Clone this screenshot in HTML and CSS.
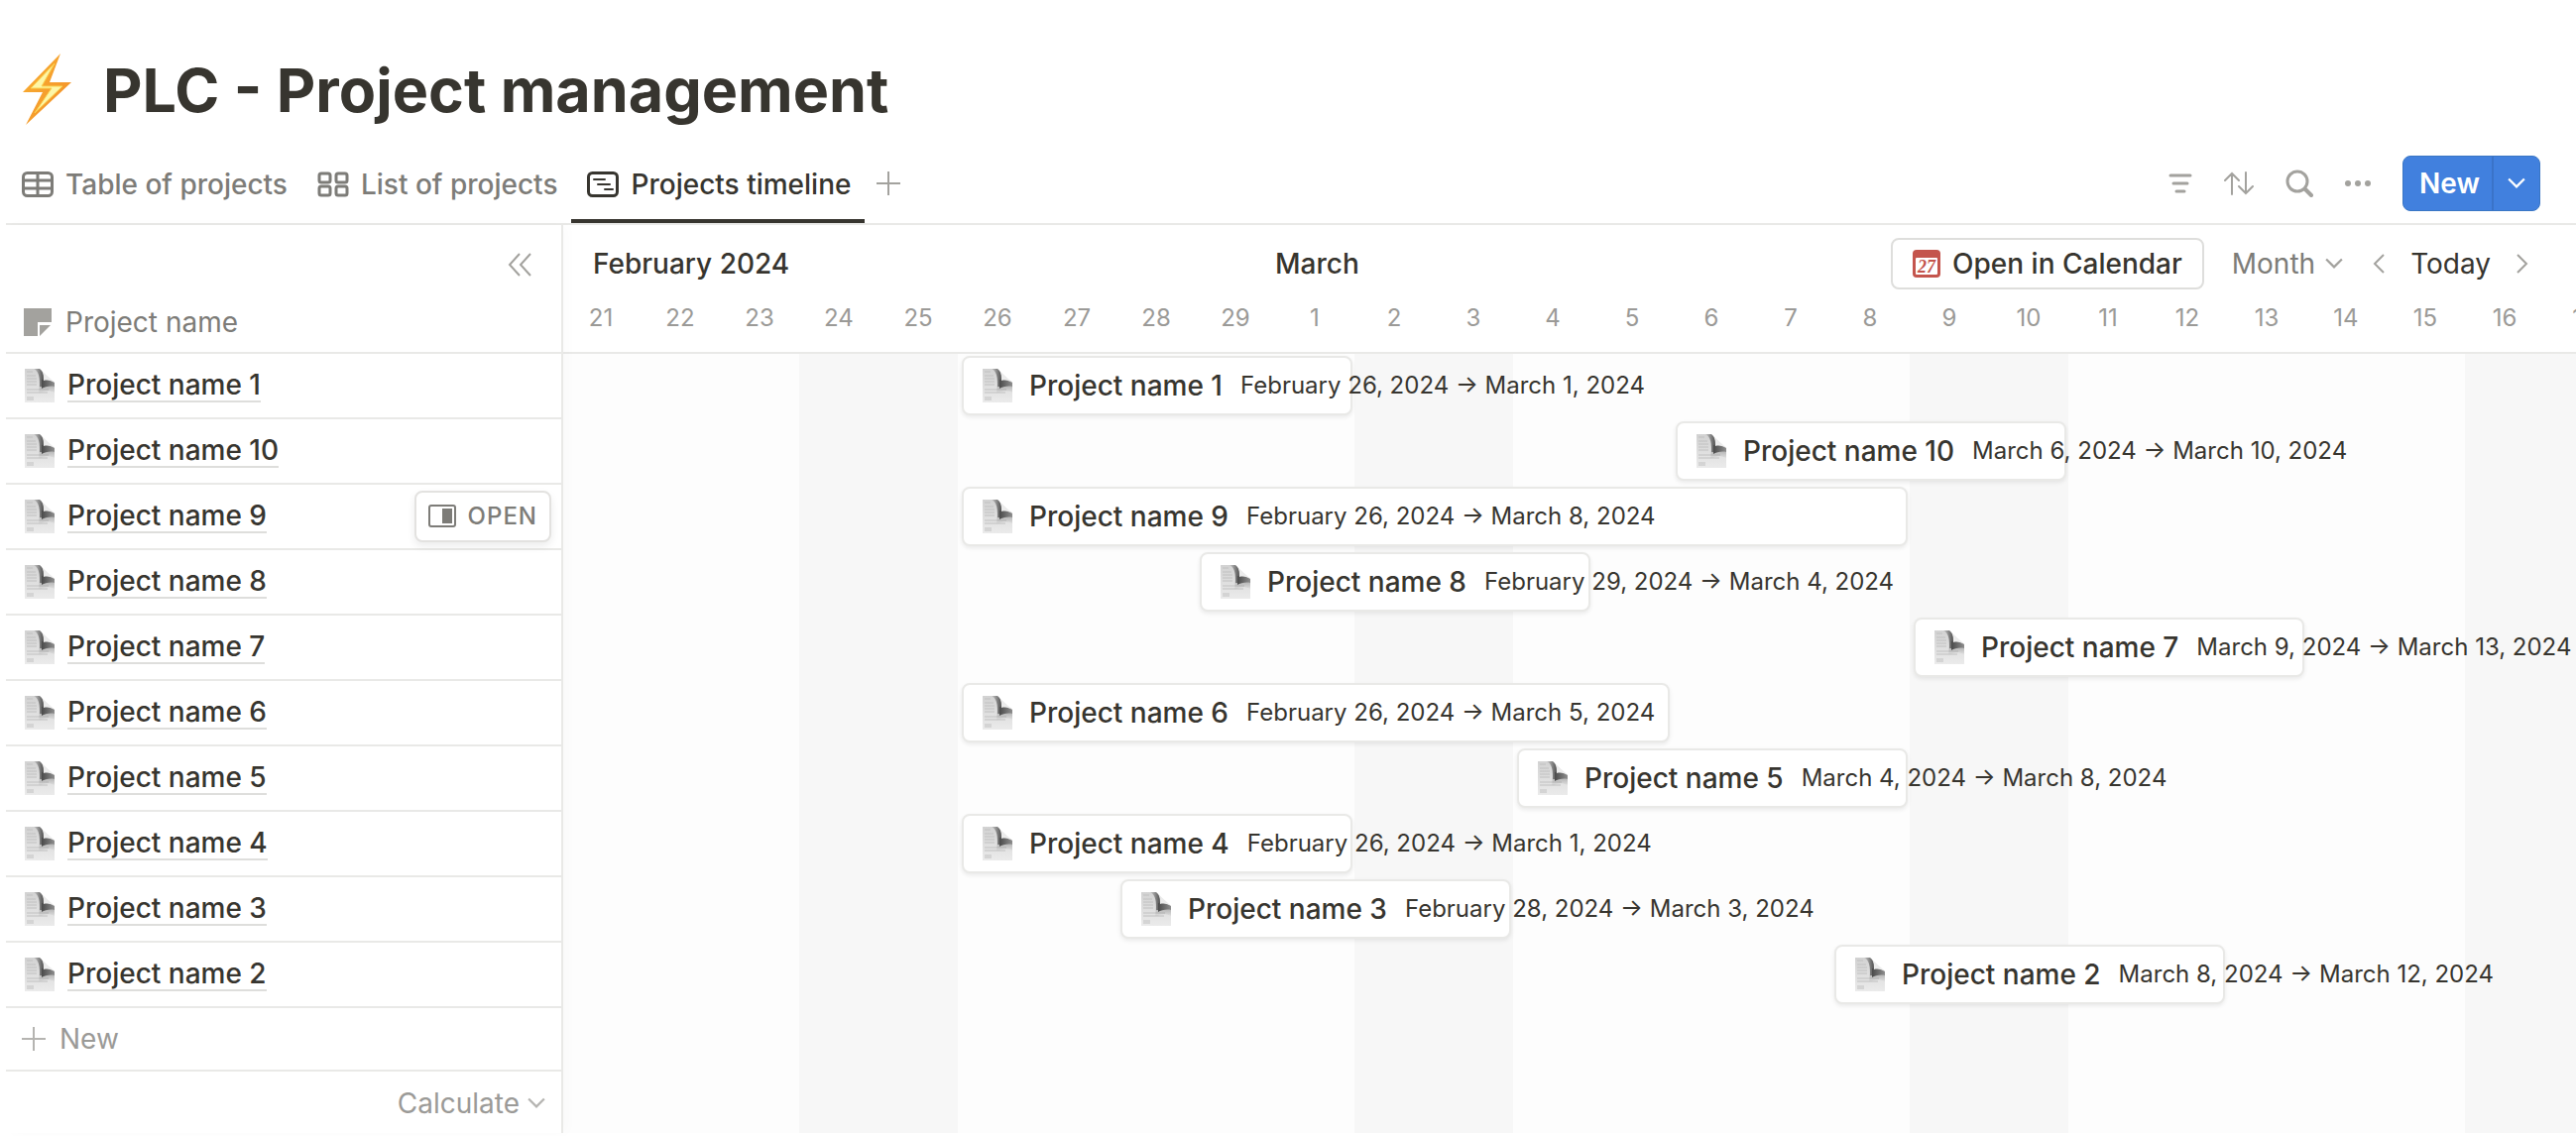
FILE: index.html
```html
<!DOCTYPE html>
<html lang="en">
<head>
    <meta charset="UTF-8">
    <meta name="viewport" content="width=device-width, initial-scale=1.0">
    <title>PLC - Project management</title>
    <link rel="stylesheet" href="styles.css">
</head>
<body>
    <!-- Shared icons -->
    <svg class="sprite" aria-hidden="true">
        <defs>
            <linearGradient id="paper" x1="0" y1="0" x2="0" y2="1">
                <stop offset="0" stop-color="#d2d2d2"/>
                <stop offset="1" stop-color="#ebebeb"/>
            </linearGradient>
            <linearGradient id="crease" x1="0" y1="0" x2="1" y2="0">
                <stop offset="0" stop-color="#c8c8c8"/>
                <stop offset="1" stop-color="#4c4c4c"/>
            </linearGradient>
            <linearGradient id="fold" x1="0" y1="0" x2="1" y2="0">
                <stop offset="0" stop-color="#4a4a4a"/>
                <stop offset="1" stop-color="#8e8e8e"/>
            </linearGradient>
            <linearGradient id="shade" x1="0" y1="0" x2="0" y2="1">
                <stop offset="0" stop-color="#777"/>
                <stop offset="1" stop-color="#777" stop-opacity="0"/>
            </linearGradient>
            <linearGradient id="bolt" x1="0" y1="0" x2="1" y2="1">
                <stop offset="0" stop-color="#f9b233"/>
                <stop offset="1" stop-color="#f28c28"/>
            </linearGradient>
        </defs>
        <symbol id="page" viewBox="0 0 36 36">
            <path d="M3 1h14l16 14v20H3z" fill="url(#paper)"/>
            <path d="M5 4h6M5 8h9M5 11h10M5 14h10M5 17h10M5 22h22M5 25h21M5 30h7M5 32h7" stroke="#c0c0c0" stroke-width="1" fill="none"/>
            <path d="M18 16h15v9c-6-3-10-2-16 1z" fill="url(#shade)" opacity="0.5"/>
            <path d="M12 1h6c4 3 5 8 4 12v6h-4C18 11 18 4 12 1z" fill="url(#crease)"/>
            <path d="M20 12c4-1 10 0 13 3v4c-4-1-10 0-13 2z" fill="url(#fold)"/>
            <path d="M18 1l15 14c-3-2-7-3-11-2 0-5 0-9-4-12z" fill="#ececec"/>
        </symbol>
        <symbol id="chevron" viewBox="0 0 16 10">
            <path d="M1 1l7 7 7-7" fill="none" stroke="currentColor" stroke-width="2"/>
        </symbol>
        <symbol id="plus" viewBox="0 0 24 24">
            <path d="M12 0v24M0 12h24" stroke="currentColor" stroke-width="2"/>
        </symbol>
    </svg>

    <header class="page-title">
        <svg class="bolt" viewBox="0 0 50 72" aria-hidden="true">
            <path d="M39 0L1 39h20L4 72l46-43H28z" fill="url(#bolt)"/>
            <path d="M33 10L9 35h21L13 60l28-27H20z" fill="#fdf6a8" stroke="#fbd24e" stroke-width="1"/>
        </svg>
        <h1>PLC - Project management</h1>
    </header>

    <nav class="views">
        <a class="view" href="#table">
            <svg width="32" height="26" viewBox="0 0 32 26" fill="none" stroke="currentColor" stroke-width="3">
                <rect x="1.500" y="1.500" width="29" height="23" rx="4"/>
                <path d="M2 9h28M2 17h28M16 2v22"/>
            </svg>
            Table of projects
        </a>
        <a class="view" href="#list">
            <svg width="32" height="26" viewBox="0 0 32 26" fill="none" stroke="currentColor" stroke-width="3">
                <rect x="2" y="2" width="11" height="9" rx="2"/>
                <rect x="19" y="2" width="11" height="9" rx="2"/>
                <rect x="2" y="15" width="11" height="9" rx="2"/>
                <rect x="19" y="15" width="11" height="9" rx="2"/>
            </svg>
            List of projects
        </a>
        <a class="view active" href="#timeline">
            <svg width="32" height="26" viewBox="0 0 32 26" fill="none" stroke="currentColor" stroke-width="3" stroke-linecap="round">
                <rect x="1.500" y="1.500" width="29" height="23" rx="4"/>
                <path d="M7 8h11M11 13h12M18 18h8" stroke-width="2"/>
            </svg>
            Projects timeline
        </a>
        <button class="icon-btn add-view" aria-label="Add view"><svg width="24" height="24"><use href="#plus"/></svg></button>

        <div class="tools">
            <button class="icon-btn" aria-label="Filter">
                <svg width="24" height="20" viewBox="0 0 24 20" fill="none" stroke="currentColor" stroke-width="3" stroke-linecap="round"><path d="M2 2h20M5 10h14M8 18h8"/></svg>
            </button>
            <button class="icon-btn" aria-label="Sort">
                <svg width="30" height="24" viewBox="0 0 30 24" fill="none" stroke="currentColor" stroke-width="2" stroke-linecap="round"><path d="M8 23V2M1 9l7-7 7 7M22 1v21M15 15l7 7 7-7"/></svg>
            </button>
            <button class="icon-btn" aria-label="Search">
                <svg width="28" height="28" viewBox="0 0 28 28" fill="none" stroke="currentColor" stroke-width="3" stroke-linecap="round"><circle cx="12" cy="12" r="10"/><path d="M20 20l6 6" stroke-width="4"/></svg>
            </button>
            <button class="icon-btn" aria-label="More">
                <svg width="26" height="8" viewBox="1 0 26 8" fill="currentColor"><circle cx="4" cy="4" r="3"/><circle cx="14" cy="4" r="3"/><circle cx="24" cy="4" r="3"/></svg>
            </button>
            <div class="new-group">
                <button class="new-btn">New</button>
                <button class="new-menu" aria-label="New options"><svg width="18" height="12"><use href="#chevron"/></svg></button>
            </div>
        </div>
    </nav>

    <main class="board">
        <aside class="sidebar">
            <div class="sidebar-head">
                <button class="icon-btn collapse" aria-label="Collapse">
                    <svg width="24" height="24" viewBox="0 0 24 24" fill="none" stroke="currentColor" stroke-width="2"><path d="M12 1L2 12l10 11M23 1L13 12l10 11"/></svg>
                </button>
                <div class="column-name">
                    <svg width="28" height="28" viewBox="0 0 28 28" fill="currentColor"><path d="M0 0h28v14H14v14H0z"/><path d="M16 17h11L16 28z"/></svg>
                    Project name
                </div>
            </div>
            <div id="names"></div>
            <button class="new-row"><svg width="24" height="24"><use href="#plus"/></svg>New</button>
            <button class="calculate">Calculate<svg width="18" height="12"><use href="#chevron"/></svg></button>
        </aside>

        <section class="timeline">
            <div class="timeline-head">
                <span class="month">February 2024</span>
                <span class="month">March</span>
                <div class="controls">
                    <button class="open-calendar">
                        <svg width="28" height="28" viewBox="0 0 28 28" aria-hidden="true">
                            <rect width="28" height="28" rx="4" fill="#c4554d"/>
                            <rect x="3" y="8" width="22" height="17" rx="1" fill="#fff"/>
                            <text x="14" y="23" text-anchor="middle" class="calendar-day">27</text>
                        </svg>
                        Open in Calendar
                    </button>
                    <button class="range">Month<svg width="18" height="12"><use href="#chevron"/></svg></button>
                    <button class="icon-btn" aria-label="Previous"><svg width="12" height="20" viewBox="0 0 12 20" fill="none" stroke="currentColor" stroke-width="2"><path d="M11 1L2 10l9 9"/></svg></button>
                    <button class="today">Today</button>
                    <button class="icon-btn" aria-label="Next"><svg width="12" height="20" viewBox="0 0 12 20" fill="none" stroke="currentColor" stroke-width="2"><path d="M1 1l9 9-9 9"/></svg></button>
                </div>
                <div class="days" id="days"></div>
            </div>
            <div class="grid" id="grid"></div>
        </section>
    </main>

    <script>
        // start = days after February 21, span = length in days
        const projects = [
            { name: "Project name 1", start: 5, span: 5, dates: "February 26, 2024 → March 1, 2024" },
            { name: "Project name 10", start: 14, span: 5, dates: "March 6, 2024 → March 10, 2024" },
            { name: "Project name 9", start: 5, span: 12, dates: "February 26, 2024 → March 8, 2024", open: true },
            { name: "Project name 8", start: 8, span: 5, dates: "February 29, 2024 → March 4, 2024" },
            { name: "Project name 7", start: 17, span: 5, dates: "March 9, 2024 → March 13, 2024" },
            { name: "Project name 6", start: 5, span: 9, dates: "February 26, 2024 → March 5, 2024" },
            { name: "Project name 5", start: 12, span: 5, dates: "March 4, 2024 → March 8, 2024" },
            { name: "Project name 4", start: 5, span: 5, dates: "February 26, 2024 → March 1, 2024" },
            { name: "Project name 3", start: 7, span: 5, dates: "February 28, 2024 → March 3, 2024" },
            { name: "Project name 2", start: 16, span: 5, dates: "March 8, 2024 → March 12, 2024" }
        ];

        const pageIcon = '<svg class="page-icon" aria-hidden="true"><use href="#page"/></svg>';
        const openButton = `<button class="open-btn">
            <svg width="28" height="26" viewBox="0 0 28 26" aria-hidden="true"><rect x="1" y="2" width="26" height="21" rx="2" fill="none" stroke="currentColor" stroke-width="2"/><rect x="14" y="5" width="10" height="15" fill="currentColor"/></svg>OPEN</button>`;

        // Day numbers
        const days = document.getElementById("days");
        for (let i = 0; i < 26; i++) {
            const day = new Date(2024, 1, 21 + i).getDate();
            days.innerHTML += `<span>${day}</span>`;
        }

        // Sidebar rows and bars
        const names = document.getElementById("names");
        const grid = document.getElementById("grid");
        projects.forEach(p => {
            names.innerHTML += `<div class="name-row">${pageIcon}<a href="#">${p.name}</a>${p.open ? openButton : ""}</div>`;
            grid.innerHTML += `<div class="lane"><div class="bar" style="grid-column: ${p.start + 1} / span ${p.span}">${pageIcon}<span class="bar-name">${p.name}</span><span class="bar-dates">${p.dates}</span></div></div>`;
        });
    </script>
</body>
</html>
```
FILE: styles.css
```css
* {
    box-sizing: border-box;
}
body {
    margin: 0;
    min-height: 100vh;
    display: flex;
    flex-direction: column;
    overflow-x: hidden;
    padding-bottom: 3px;
    background: #fff;
    color: #37352f;
    font-family: Inter, "Liberation Sans", sans-serif;
    font-size: 28px;
    line-height: 36px;
}
button {
    display: flex;
    align-items: center;
    padding: 0;
    border: 0;
    background: none;
    color: inherit;
    font: inherit;
    cursor: pointer;
    white-space: nowrap;
}
a {
    color: inherit;
    text-decoration: none;
}
svg {
    flex-shrink: 0;
}
.sprite {
    position: absolute;
    width: 0;
    height: 0;
}
.icon-btn {
    color: #a3a29e;
}

/* Title */
.page-title {
    display: flex;
    align-items: flex-start;
    gap: 32px;
    height: 130px;
    padding: 54px 22px 0 22px;
}
.page-title h1 {
    margin: 0;
    font-size: 61px;
    line-height: 74px;
    font-weight: 700;
}
.bolt {
    width: 50px;
    height: 72px;
}

/* View tabs */
.views {
    display: flex;
    align-items: stretch;
    height: 80px;
    margin: 17px 0 0 6px;
    border-bottom: 2px solid #e9e9e7;
}
.view {
    display: flex;
    align-items: center;
    gap: 12px;
    padding: 0 14px 0 16px;
    color: #7d7c78;
    font-weight: 500;
    white-space: nowrap;
}
.view.active {
    padding-top: 4px;
    color: #37352f;
    border-bottom: 4px solid #37352f;
}
.add-view {
    margin-left: 12px;
    padding-bottom: 2px;
}
.tools {
    display: flex;
    align-items: center;
    gap: 32px;
    margin: 0 36px 0 auto;
    padding-bottom: 2px;
}
.new-group {
    display: flex;
    height: 56px;
    border: 1px solid #3a76c4;
    border-radius: 8px;
    background: #4180de;
    color: #fff;
}
.new-btn {
    padding: 0 12px 0 16px;
    font-weight: 600;
}
.new-menu {
    padding: 0 14px;
    border-left: 2px solid #3a73c8;
}

/* Board */
.board {
    display: flex;
    flex: 1;
    margin-left: 6px;
}
.sidebar {
    position: relative;
    z-index: 1;
    width: 560px;
    flex-shrink: 0;
    background: #fff;
    box-shadow: 2px 0 0 #e9e9e7, 6px 0 12px rgba(15, 15, 15, 0.02);
}
.sidebar-head {
    display: flex;
    flex-direction: column;
    justify-content: space-between;
    height: 130px;
    padding: 28px 18px 12px;
    border-bottom: 2px solid #e9e9e7;
}
.collapse {
    align-self: flex-end;
    margin-right: 12px;
}
.column-name {
    display: flex;
    align-items: center;
    gap: 14px;
    color: #7d7c78;
}
.column-name svg {
    color: #a3a29e;
}
.name-row {
    display: flex;
    align-items: center;
    height: 66px;
    padding: 0 10px 0 16px;
    border-bottom: 2px solid #e9e9e7;
}
.name-row a {
    margin-left: 10px;
    font-weight: 500;
    line-height: 32px;
    border-bottom: 2px solid #dededc;
}
.page-icon {
    width: 36px;
    height: 36px;
}
.open-btn {
    gap: 12px;
    height: 52px;
    margin-left: auto;
    padding: 0 12px;
    border: 2px solid #e3e2e0;
    border-radius: 8px;
    background: #fff;
    box-shadow: 0 4px 8px rgba(15, 15, 15, 0.08);
    color: #7d7c78;
    font-size: 24px;
    font-weight: 500;
    letter-spacing: 1px;
}
.new-row {
    gap: 14px;
    width: 100%;
    height: 64px;
    padding-left: 16px;
    border-bottom: 2px solid #e9e9e7;
    color: #9b9a97;
}
.new-row svg,
.calculate svg {
    color: #b5b4b1;
}
.calculate {
    gap: 8px;
    height: 62px;
    margin-left: auto;
    padding: 2px 16px 0 0;
    color: #9b9a97;
}

/* Timeline */
.timeline {
    flex: 1;
    min-width: 0;
    display: flex;
    flex-direction: column;
    overflow: hidden;
}
.timeline-head {
    display: grid;
    grid-template-columns: 688px auto 1fr;
    grid-template-rows: 78px 50px;
    padding-left: 32px;
    border-bottom: 2px solid #e9e9e7;
}
.month {
    align-self: center;
    font-weight: 500;
}
.controls {
    display: flex;
    align-items: center;
    justify-content: flex-end;
    padding-right: 48px;
}
.open-calendar {
    gap: 12px;
    height: 52px;
    margin-right: 28px;
    padding: 0 20px;
    border: 2px solid #dededc;
    border-radius: 8px;
    font-weight: 500;
}
.calendar-day {
    fill: #c4554d;
    font: italic 700 18px "Liberation Serif", serif;
}
.range {
    gap: 10px;
    margin-right: 30px;
    color: #7d7c78;
}
.range svg {
    color: #a3a29e;
}
.today {
    margin: 0 26px;
}
.days {
    grid-column: 1 / -1;
    display: grid;
    grid-template-columns: repeat(26, 80px);
    margin-left: -32px;
    padding-top: 2px;
    color: #9b9a97;
    font-size: 24px;
    line-height: 28px;
    text-align: center;
}
.grid {
    flex: 1;
    /* weekend stripes repeat every 7 columns */
    background: repeating-linear-gradient(to right, #fdfdfd 0 240px, #f7f7f7 240px 400px, #fdfdfd 400px 560px);
}
.lane {
    display: grid;
    grid-template-columns: repeat(26, 80px);
    height: 66px;
    padding: 2px 0 4px;
}
.bar {
    display: flex;
    align-items: center;
    min-width: 0;
    margin: 0 2px 0 4px;
    padding-left: 16px;
    border: 2px solid #e9e9e7;
    border-radius: 8px;
    background: #fff;
    box-shadow: 0 2px 4px rgba(15, 15, 15, 0.08);
    white-space: nowrap;
}
.bar-name {
    margin-left: 14px;
    font-weight: 500;
}
.bar-dates {
    margin-left: 18px;
    font-size: 24px;
}
```
